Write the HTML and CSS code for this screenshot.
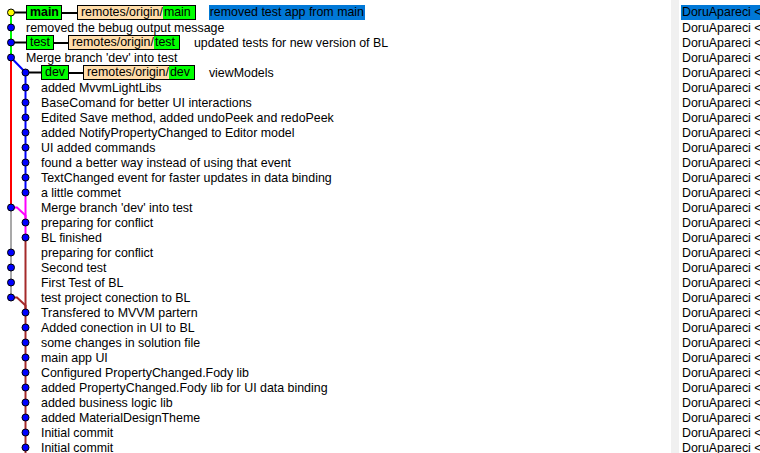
FILE: index.html
```html
<!DOCTYPE html>
<html>
<head>
<meta charset="utf-8">
<link rel="stylesheet" href="styles.css">
</head>
<body>
<div class="app">
  <div class="pane-left">
    <svg class="graph" width="60" height="453" viewBox="0 0 60 453">
      <g fill="none" stroke-width="2">
        <line x1="11" y1="12.5" x2="11" y2="57.5" stroke="#00ff00"/>
        <line x1="11" y1="57.5" x2="11" y2="207.5" stroke="#ff0000"/>
        <polyline points="11,57.5 25.5,72.5 25.5,192.5" stroke="#0000ff"/>
        <line x1="25.5" y1="192.5" x2="25.5" y2="237.5" stroke="#ff00ff"/>
        <polyline points="11,207.5 17,207.5 25.5,215.5 25.5,222.5" stroke="#ff00ff"/>
        <line x1="11" y1="207.5" x2="11" y2="297.5" stroke="#a9a9a9"/>
        <line x1="25.5" y1="237.5" x2="25.5" y2="453" stroke="#a52a2a"/>
        <polyline points="11,297.5 17,297.5 25.5,305.5 25.5,312.5" stroke="#a52a2a"/>
        <line x1="11" y1="12.5" x2="26" y2="12.5" stroke="#000"/>
        <line x1="11" y1="42.5" x2="26" y2="42.5" stroke="#000"/>
        <line x1="25.5" y1="72.5" x2="41" y2="72.5" stroke="#000"/>
      </g>
      <g stroke="#000" stroke-width="1" fill="#0000ff">
        <circle cx="11" cy="12.5" r="3.5" fill="#ffff00"/>
        <circle cx="11" cy="27.5" r="3.5"/>
        <circle cx="11" cy="42.5" r="3.5"/>
        <circle cx="11" cy="57.5" r="3.5"/>
        <circle cx="25.5" cy="72.5" r="3.5"/>
        <circle cx="25.5" cy="87.5" r="3.5"/>
        <circle cx="25.5" cy="102.5" r="3.5"/>
        <circle cx="25.5" cy="117.5" r="3.5"/>
        <circle cx="25.5" cy="132.5" r="3.5"/>
        <circle cx="25.5" cy="147.5" r="3.5"/>
        <circle cx="25.5" cy="162.5" r="3.5"/>
        <circle cx="25.5" cy="177.5" r="3.5"/>
        <circle cx="25.5" cy="192.5" r="3.5"/>
        <circle cx="11" cy="207.5" r="3.5"/>
        <circle cx="25.5" cy="222.5" r="3.5"/>
        <circle cx="25.5" cy="237.5" r="3.5"/>
        <circle cx="11" cy="252.5" r="3.5"/>
        <circle cx="11" cy="267.5" r="3.5"/>
        <circle cx="11" cy="282.5" r="3.5"/>
        <circle cx="11" cy="297.5" r="3.5"/>
        <circle cx="25.5" cy="312.5" r="3.5"/>
        <circle cx="25.5" cy="327.5" r="3.5"/>
        <circle cx="25.5" cy="342.5" r="3.5"/>
        <circle cx="25.5" cy="357.5" r="3.5"/>
        <circle cx="25.5" cy="372.5" r="3.5"/>
        <circle cx="25.5" cy="387.5" r="3.5"/>
        <circle cx="25.5" cy="402.5" r="3.5"/>
        <circle cx="25.5" cy="417.5" r="3.5"/>
        <circle cx="25.5" cy="432.5" r="3.5"/>
        <circle cx="25.5" cy="447.5" r="3.5"/>
      </g>
    </svg>
    <div class="rows">
      <div class="row c0">
        <span class="ref head bold">main</span><span class="conn w15"></span><span class="ref remote">remotes/origin/<span class="rb">main</span></span>
        <span class="subject selected">removed test app from main</span>
      </div>
      <div class="row c0">removed the bebug output message</div>
      <div class="row c0">
        <span class="ref head">test</span><span class="conn"></span><span class="ref remote">remotes/origin/<span class="rb">test</span></span>
        <span class="subject">updated tests for new version of BL</span>
      </div>
      <div class="row c0">Merge branch 'dev' into test</div>
      <div class="row c1">
        <span class="ref head">dev</span><span class="conn"></span><span class="ref remote">remotes/origin/<span class="rb">dev</span></span>
        <span class="subject">viewModels</span>
      </div>
      <div class="row c1">added MvvmLightLibs</div>
      <div class="row c1">BaseComand for better UI interactions</div>
      <div class="row c1">Edited Save method, added undoPeek and redoPeek</div>
      <div class="row c1">added NotifyPropertyChanged to Editor model</div>
      <div class="row c1">UI added commands</div>
      <div class="row c1">found a better way instead of using that event</div>
      <div class="row c1">TextChanged event for faster updates in data binding</div>
      <div class="row c1">a little commet</div>
      <div class="row c1">Merge branch 'dev' into test</div>
      <div class="row c1">preparing for conflict</div>
      <div class="row c1">BL finished</div>
      <div class="row c1">preparing for conflict</div>
      <div class="row c1">Second test</div>
      <div class="row c1">First Test of BL</div>
      <div class="row c1">test project conection to BL</div>
      <div class="row c1">Transfered to MVVM partern</div>
      <div class="row c1">Added conection in UI to BL</div>
      <div class="row c1">some changes in solution file</div>
      <div class="row c1">main app UI</div>
      <div class="row c1">Configured PropertyChanged.Fody lib</div>
      <div class="row c1">added PropertyChanged.Fody lib for UI data binding</div>
      <div class="row c1">added business logic lib</div>
      <div class="row c1">added MaterialDesignTheme</div>
      <div class="row c1">Initial commit</div>
      <div class="row c1">Initial commit</div>
    </div>
  </div>
  <div class="sash"></div>
  <div class="pane-right">
    <div class="arow"><span class="author selected">DoruApareci &lt;</span></div>
    <div class="arow"><span class="author">DoruApareci &lt;</span></div>
    <div class="arow"><span class="author">DoruApareci &lt;</span></div>
    <div class="arow"><span class="author">DoruApareci &lt;</span></div>
    <div class="arow"><span class="author">DoruApareci &lt;</span></div>
    <div class="arow"><span class="author">DoruApareci &lt;</span></div>
    <div class="arow"><span class="author">DoruApareci &lt;</span></div>
    <div class="arow"><span class="author">DoruApareci &lt;</span></div>
    <div class="arow"><span class="author">DoruApareci &lt;</span></div>
    <div class="arow"><span class="author">DoruApareci &lt;</span></div>
    <div class="arow"><span class="author">DoruApareci &lt;</span></div>
    <div class="arow"><span class="author">DoruApareci &lt;</span></div>
    <div class="arow"><span class="author">DoruApareci &lt;</span></div>
    <div class="arow"><span class="author">DoruApareci &lt;</span></div>
    <div class="arow"><span class="author">DoruApareci &lt;</span></div>
    <div class="arow"><span class="author">DoruApareci &lt;</span></div>
    <div class="arow"><span class="author">DoruApareci &lt;</span></div>
    <div class="arow"><span class="author">DoruApareci &lt;</span></div>
    <div class="arow"><span class="author">DoruApareci &lt;</span></div>
    <div class="arow"><span class="author">DoruApareci &lt;</span></div>
    <div class="arow"><span class="author">DoruApareci &lt;</span></div>
    <div class="arow"><span class="author">DoruApareci &lt;</span></div>
    <div class="arow"><span class="author">DoruApareci &lt;</span></div>
    <div class="arow"><span class="author">DoruApareci &lt;</span></div>
    <div class="arow"><span class="author">DoruApareci &lt;</span></div>
    <div class="arow"><span class="author">DoruApareci &lt;</span></div>
    <div class="arow"><span class="author">DoruApareci &lt;</span></div>
    <div class="arow"><span class="author">DoruApareci &lt;</span></div>
    <div class="arow"><span class="author">DoruApareci &lt;</span></div>
    <div class="arow"><span class="author">DoruApareci &lt;</span></div>
  </div>
</div>
</body>
</html>
```

FILE: styles.css
```css
html, body {
  margin: 0;
  padding: 0;
  background: #fff;
}
body {
  font-family: "Liberation Sans", Arial, sans-serif;
  font-size: 12.4px;
  color: #000;
  width: 760px;
  height: 453px;
  overflow: hidden;
}
.app {
  display: flex;
  height: 453px;
}
.pane-left {
  position: relative;
  width: 671px;
  flex: none;
  overflow: hidden;
  background: #fff;
}
.graph {
  position: absolute;
  left: 0;
  top: 0;
}
.rows {
  padding-top: 5px;
}
.row {
  height: 15px;
  display: flex;
  align-items: center;
  white-space: nowrap;
  line-height: 16px;
}
.c0 { padding-left: 26px; }
.c1 { padding-left: 41px; }
.ref {
  box-sizing: border-box;
  height: 15px;
  border: 1px solid #000;
  display: inline-flex;
  align-items: center;
  line-height: 13px;
  padding-left: 3px;
}
.head {
  background: #00ff00;
  padding-right: 3px;
}
.head.bold {
  font-weight: bold;
  padding-right: 2px;
}
.remote {
  background: #ffddaa;
}
.rb {
  background: #00ff00;
  padding: 0 4px 0 1px;
  height: 13px;
}
.conn {
  width: 14px;
  height: 2px;
  background: #000;
  flex: none;
}
.conn.w15 { width: 15px; }
.subject {
  margin-left: 14px;
}
.subject.selected {
  background: #0078d7;
  height: 15px;
  line-height: 15px;
  padding: 0 1px;
  margin-left: 13px;
}
.sash {
  width: 8px;
  flex: none;
  background: #f0f0f0;
}
.pane-right {
  flex: 1;
  background: #fff;
  padding-top: 5px;
  overflow: hidden;
}
.arow {
  height: 15px;
  line-height: 16px;
  padding-left: 2px;
  white-space: nowrap;
  display: flex;
}
.author {
  padding-left: 1px;
}
.author.selected {
  background: #0078d7;
  line-height: 15px;
  flex: 1;
}
```
